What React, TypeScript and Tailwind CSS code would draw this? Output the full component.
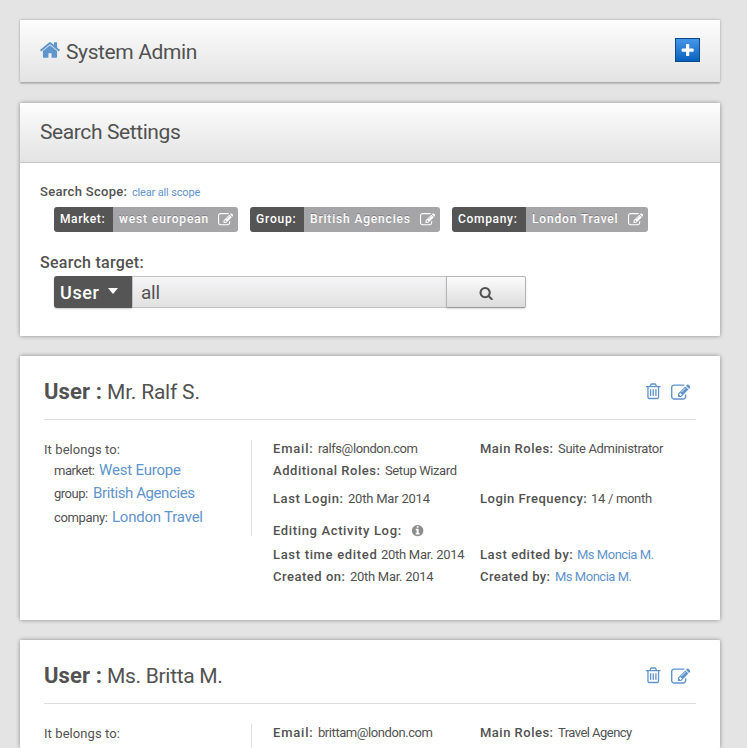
import type { ReactNode } from 'react';

const ICONS = {
  home: 'M1472 992v480q0 26-19 45t-45 19h-384v-384h-256v384h-384q-26 0-45-19t-19-45v-480q0-1 .5-3t.5-3l575-474 575 474q1 2 1 6zm223-69l-62 74q-8 9-21 11h-3q-13 0-21-7l-692-577-692 577q-12 8-24 7-13-2-21-11l-62-74q-8-10-7-23.5t11-21.5l719-599q32-26 76-26t76 26l244 204v-195q0-14 9-23t23-9h192q14 0 23 9t9 23v408l219 182q10 8 11 21.5t-7 23.5z',
  edit: 'M888 1184l116-116-152-152-116 116v56h96v96h56zm440-720q-16-16-33 1l-350 350q-17 17-1 33t33-1l350-350q17-17 1-33zm80 594v190q0 119-84.5 203.5t-203.5 84.5h-832q-119 0-203.5-84.5t-84.5-203.5v-832q0-119 84.5-203.5t203.5-84.5h832q63 0 117 25 15 7 18 23 3 17-9 29l-49 49q-14 14-32 8-23-6-45-6h-832q-66 0-113 47t-47 113v832q0 66 47 113t113 47h832q66 0 113-47t47-113v-126q0-13 9-22l64-64q15-15 35-7t20 29zm-96-738l288 288-672 672h-288v-288zm444 132l-92 92-288-288 92-92q28-28 68-28t68 28l152 152q28 28 28 68t-28 68z',
  trash: 'M704 736v576q0 14-9 23t-23 9h-64q-14 0-23-9t-9-23v-576q0-14 9-23t23-9h64q14 0 23 9t9 23zm256 0v576q0 14-9 23t-23 9h-64q-14 0-23-9t-9-23v-576q0-14 9-23t23-9h64q14 0 23 9t9 23zm256 0v576q0 14-9 23t-23 9h-64q-14 0-23-9t-9-23v-576q0-14 9-23t23-9h64q14 0 23 9t9 23zm128 724v-948h-896v948q0 22 7 40.5t14.5 27 10.5 8.5h832q3 0 10.5-8.5t14.5-27 7-40.5zm-672-1076h448l-48-117q-7-9-17-11h-317q-10 2-17 11zm928 32v64q0 14-9 23t-23 9h-96v948q0 83-47 143.5t-113 60.5h-832q-66 0-113-58.5t-47-141.5v-952h-96q-14 0-23-9t-9-23v-64q0-14 9-23t23-9h309l70-167q15-37 54-63t79-26h320q40 0 79 26t54 63l70 167h309q14 0 23 9t9 23z',
  info: 'M1152 1376v-160q0-14-9-23t-23-9h-96v-512q0-14-9-23t-23-9h-320q-14 0-23 9t-9 23v160q0 14 9 23t23 9h96v320h-96q-14 0-23 9t-9 23v160q0 14 9 23t23 9h448q14 0 23-9t9-23zm-128-896v-160q0-14-9-23t-23-9h-192q-14 0-23 9t-9 23v160q0 14 9 23t23 9h192q14 0 23-9t9-23zm640 416q0 209-103 385.5t-279.5 279.5-385.5 103-385.5-103-279.5-279.5-103-385.5 103-385.5 279.5-279.5 385.5-103 385.5 103 279.5 279.5 103 385.5z',
  search: 'M1216 832q0-185-131.5-316.5t-316.5-131.5-316.5 131.5-131.5 316.5 131.5 316.5 316.5 131.5 316.5-131.5 131.5-316.5zm512 832q0 52-38 90t-90 38q-54 0-90-38l-343-342q-179 124-399 124-143 0-273.5-55.5t-225-150-150-225-55.5-273.5 55.5-273.5 150-225 225-150 273.5-55.5 273.5 55.5 225 150 150 225 55.5 273.5q0 220-124 399l343 343q37 37 37 90z',
  plus: 'M1600 736v192q0 40-28 68t-68 28h-416v416q0 40-28 68t-68 28h-192q-40 0-68-28t-28-68v-416h-416q-40 0-68-28t-28-68v-192q0-40 28-68t68-28h416v-416q0-40 28-68t68-28h192q40 0 68 28t28 68v416h416q40 0 68 28t28 68z',
};

function Icon({ name, className }: { name: keyof typeof ICONS; className: string }) {
  return (
    <svg viewBox="0 0 1792 1792" fill="currentColor" className={`shrink-0 ${className}`}>
      <path d={ICONS[name]} />
    </svg>
  );
}

function Panel({ className, children }: { className: string; children: ReactNode }) {
  return (
    <section className={`w-[700px] shrink-0 rounded-[1px] ${className}`}>
      {children}
    </section>
  );
}

function Chip({ label, value, labelClass, valueClass }: { label: string; value: string; labelClass: string; valueClass: string }) {
  return (
    <div className="flex h-[25px] overflow-hidden rounded-[3px] text-[12px] leading-[24px] font-medium text-white">
      <span className={`bg-[#555] pl-[6px] ${labelClass}`}>{label}</span>
      <span className={`flex justify-between bg-[#a5a5a8] pr-[5px] pl-[6px] [text-shadow:0_-1px_0_rgba(0,0,0,0.25)] ${valueClass}`}>
        {value}
        <Icon name="edit" className="mt-[5px] size-[15.5px]" />
      </span>
    </div>
  );
}

function Field({ label, value, labelClass, valueClass, link }: { label: string; value: string; labelClass: string; valueClass: string; link?: boolean }) {
  return (
    <div className="flex">
      <b className={`shrink-0 font-medium ${labelClass}`}>{label}</b>
      <span className={`${link ? 'text-[#5f94cc]' : ''} ${valueClass}`}>{value}</span>
    </div>
  );
}

type User = {
  name: string;
  nameClass: string;
  email: string;
  emailClass: string;
  role: string;
  roleClass: string;
  cardClass: string;
  dividerClass: string;
  detailed: boolean;
};

function Scopes() {
  return (
    <>
      <div className="flex h-[23px] pl-[10px] leading-[24px]">
        <span className="w-[45px] pt-px tracking-[-0.44px]">market:</span>
        <span className="text-[15px] tracking-[-0.19px] text-[#5f94cc]">West Europe</span>
      </div>
      <div className="flex h-[24px] pl-[10px] leading-[24px]">
        <span className="w-[39px] pt-px tracking-[-0.5px]">group:</span>
        <span className="text-[15px] tracking-[-0.4px] text-[#5f94cc]">British Agencies</span>
      </div>
      <div className="flex pl-[10px] leading-[24px]">
        <span className="w-[58px] pt-px tracking-[-0.35px]">company:</span>
        <span className="text-[15px] tracking-[-0.22px] text-[#5f94cc]">London Travel</span>
      </div>
    </>
  );
}

function Activity() {
  return (
    <>
      <div className="col-span-2">
        <Field label="Additional Roles:" labelClass="w-[112px] tracking-[0.54px]" value="Setup Wizard" valueClass="tracking-[-0.4px]" />
      </div>
      <div className="mt-[6px]">
        <Field label="Last Login:" labelClass="w-[75px] tracking-[0.6px]" value="20th Mar 2014" valueClass="tracking-[-0.21px]" />
      </div>
      <div className="mt-[6px]">
        <Field label="Login Frequency:" labelClass="w-[111px] tracking-[0.49px]" value="14 / month" valueClass="tracking-[-0.31px]" />
      </div>
      <div className="col-span-2 mt-[10px] flex">
        <b className="w-[138px] font-medium tracking-[0.64px]">Editing Activity Log:</b>
        <Icon name="info" className="mt-[4px] size-[13.3px] text-[#8c8c8c]" />
      </div>
      <div className="mt-[2px]">
        <Field label="Last time edited" labelClass="w-[108px] tracking-[0.67px]" value="20th Mar. 2014" valueClass="tracking-[-0.28px]" />
      </div>
      <div className="mt-[2px]">
        <Field label="Last edited by:" labelClass="w-[97px] tracking-[0.57px]" value="Ms Moncia M." valueClass="tracking-[-0.48px]" link />
      </div>
      <Field label="Created on:" labelClass="w-[77px] tracking-[0.52px]" value="20th Mar. 2014" valueClass="tracking-[-0.28px]" />
      <Field label="Created by:" labelClass="w-[75px] tracking-[0.42px]" value="Ms Moncia M." valueClass="tracking-[-0.48px]" link />
    </>
  );
}

function UserCard({ user }: { user: User }) {
  return (
    <Panel className={`bg-white px-6 shadow-[0_0_4px_rgba(0,0,0,0.4)] ${user.cardClass}`}>
      <header className="flex h-16 border-b border-[#ddd]">
        <h2 className="flex flex-1 pt-[20px] leading-[32px]">
          <b className="w-[63px] text-[22px] font-bold tracking-[0.1px]">User :</b>
          <span className={`text-[21px] ${user.nameClass}`}>{user.name}</span>
        </h2>
        <div className="flex pr-[6px] text-[#5f94cc]">
          <Icon name="trash" className="mt-[25.5px] mr-[7.7px] size-[18.5px]" />
          <Icon name="edit" className="mt-[26.6px] size-[19.5px]" />
        </div>
      </header>
      <div className="mt-[18px] flex text-[13px] leading-[22px]">
        <div className={`mt-[2px] w-[208px] border-r border-[#ddd] ${user.dividerClass}`}>
          <div className="-mt-px h-[19px] tracking-[0.08px]">It belongs to:</div>
          {user.detailed && <Scopes />}
        </div>
        <div className="grid flex-1 grid-cols-[207px_1fr] pl-[21px] whitespace-nowrap">
          <Field label="Email:" labelClass="w-[45px] tracking-[0.8px]" value={user.email} valueClass={user.emailClass} />
          <Field label="Main Roles:" labelClass="w-[78px] tracking-[0.49px]" value={user.role} valueClass={user.roleClass} />
          {user.detailed && <Activity />}
        </div>
      </div>
    </Panel>
  );
}

const USERS: User[] = [
  {
    name: 'Mr. Ralf S.',
    nameClass: 'tracking-[-0.2px]',
    email: 'ralfs@london.com',
    emailClass: 'tracking-[-0.4px]',
    role: 'Suite Administrator',
    roleClass: 'tracking-[-0.33px]',
    cardClass: 'h-[264px]',
    dividerClass: 'h-24',
    detailed: true,
  },
  {
    name: 'Ms. Britta M.',
    nameClass: 'tracking-[-0.3px]',
    email: 'brittam@london.com',
    emailClass: 'tracking-[-0.43px]',
    role: 'Travel Agency',
    roleClass: 'tracking-[-0.54px]',
    cardClass: 'h-[108px]',
    dividerClass: 'h-6',
    detailed: false,
  },
];

export default function App() {
  return (
    <main className="flex h-[748px] w-[747px] flex-col gap-5 overflow-hidden bg-[#e4e4e4] pt-5 pl-5 font-['Roboto',sans-serif] text-[#525252]">
      <Panel className="mb-px flex h-[62px] items-start bg-linear-to-b from-[#fdfdfd] to-[#e3e3e3] pr-5 pl-[19px] shadow-[0_0_3px_rgba(0,0,0,0.3),0_2px_1px_#c4c4c4]">
        <Icon name="home" className="mt-[19px] size-[22px] text-[#5f94cc]" />
        <h1 className="ml-[5px] flex-1 pt-4 text-[21px] leading-[32px] tracking-[-0.38px]">System Admin</h1>
        <button className="mt-[18px] flex h-6 w-[25px] items-center justify-center border border-[#0a4a8c] bg-linear-to-b from-[#4497e8] to-[#0560bd] pt-[2px] text-white">
          <Icon name="plus" className="size-[15.3px]" />
        </button>
      </Panel>

      <Panel className="h-[233px] bg-white shadow-[0_0_4px_rgba(0,0,0,0.4)]">
        <header className="h-[60px] rounded-t-[1px] border-b border-[#c8c8c8] bg-linear-to-b from-[#fdfdfd] to-[#e3e3e3] pl-5">
          <h2 className="pt-[13px] text-[21px] leading-[32px] tracking-[-0.4px]">Search Settings</h2>
        </header>
        <div className="px-5 pt-[18px]">
          <div className="flex h-[26px] leading-[22px]">
            <span className="w-[92px] text-[13px] font-medium tracking-[0.31px]">Search Scope:</span>
            <a className="text-[11px] leading-[23px] tracking-[-0.16px] text-[#5f94cc]">clear all scope</a>
          </div>
          <div className="flex gap-3 pl-[14px]">
            <Chip label="Market:" labelClass="w-[59px] tracking-[0.62px]" value="west european" valueClass="w-[125px] tracking-[0.87px]" />
            <Chip label="Group:" labelClass="w-[54px] tracking-[0.82px]" value="British Agencies" valueClass="w-[136px] tracking-[0.83px]" />
            <Chip label="Company:" labelClass="w-[74px] tracking-[0.68px]" value="London Travel" valueClass="w-[122px] tracking-[0.84px]" />
          </div>
          <div className="mt-[19px] h-[25px] text-[16px] leading-[24px] font-medium tracking-[0.26px]">Search target:</div>
          <div className="flex h-8 pl-[14px]">
            <button className="flex w-[78px] items-center rounded-l-[3px] bg-[#555] pl-[6px] text-[18px] font-medium tracking-[0.6px] text-white shadow-[0_1px_2px_rgba(0,0,0,0.2)]">
              <span className="w-[48px] text-left">User</span>
              <span className="-mt-[2px] border-x-[5.5px] border-t-[6px] border-x-transparent border-t-white" />
            </button>
            <div className="w-[314px] border border-r-0 border-[#c2c2c2] bg-linear-to-b from-[#f5f5f7] to-[#e2e2e2] pl-2 text-[19px] leading-[31px] tracking-[-0.29px]">all</div>
            <button className="flex w-20 items-center justify-center rounded-r-[2px] border border-[#b4b4b4] border-b-[#999] bg-linear-to-b from-[#fcfcfc] to-[#dcdcdc] shadow-[0_1px_2px_rgba(0,0,0,0.15)]">
              <Icon name="search" className="mt-[2px] size-[14.3px]" />
            </button>
          </div>
        </div>
      </Panel>

      {USERS.map((user) => (
        <UserCard key={user.name} user={user} />
      ))}
    </main>
  );
}
